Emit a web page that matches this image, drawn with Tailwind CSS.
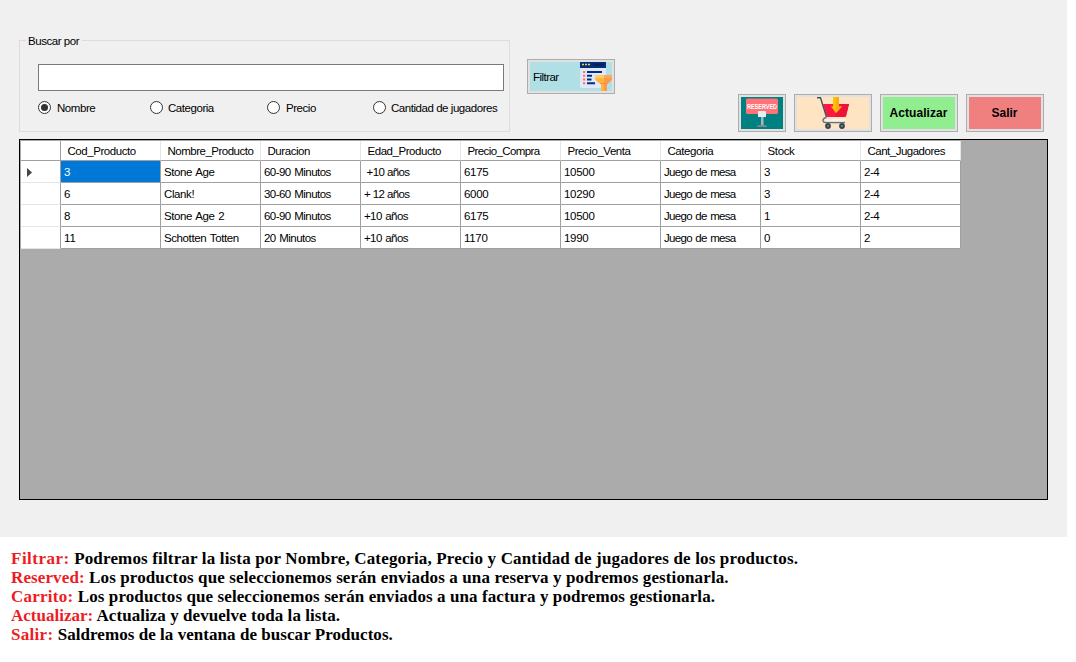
<!DOCTYPE html>
<html lang="es">
<head>
<meta charset="utf-8">
<title>Buscar Productos</title>
<script src="https://cdn.jsdelivr.net/npm/@tailwindcss/browser@4"></script>
</head>
<body class="w-[1076px] h-[662px] overflow-hidden bg-white text-black font-['Liberation_Sans',Arial,sans-serif] text-[11.5px] leading-[13px] tracking-[-0.45px] whitespace-nowrap">
<main class="w-[1067px] h-[537px] bg-[#f0f0f0] pl-[19px] pt-[35px]">
  <div class="flex h-[104px]">
    <fieldset class="w-[491px] border border-[#dcdcdc] pl-[18px] relative mt-[5px] h-[92px]">
      <legend class="absolute -top-[6px] left-[6px] bg-[#f0f0f0] px-[2px] w-[56px]">Buscar por</legend>
      <input type="text" aria-label="Buscar" class="block mt-[23px] w-[466px] h-[27px] bg-white border border-[#7a7a7a] rounded-none">
      <div class="flex mt-[10px] h-[13px] items-center [&_span]:pt-px">
        <label class="flex items-center w-[112px] gap-[6px]"><svg class="size-[13px] shrink-0" viewBox="0 0 13 13"><circle cx="6.5" cy="6.5" r="6" fill="#fff" stroke="#333"/><circle cx="6.5" cy="6.5" r="3.5" fill="#333"/></svg><span>Nombre</span></label>
        <label class="flex items-center w-[117px] gap-[5px]"><svg class="size-[13px] shrink-0" viewBox="0 0 13 13"><circle cx="6.5" cy="6.5" r="6" fill="#fff" stroke="#333"/></svg><span>Categoria</span></label>
        <label class="flex items-center w-[106px] gap-[6px]"><svg class="size-[13px] shrink-0" viewBox="0 0 13 13"><circle cx="6.5" cy="6.5" r="6" fill="#fff" stroke="#333"/></svg><span>Precio</span></label>
        <label class="flex items-center gap-[5px]"><svg class="size-[13px] shrink-0" viewBox="0 0 13 13"><circle cx="6.5" cy="6.5" r="6" fill="#fff" stroke="#333"/></svg><span>Cantidad de jugadores</span></label>
      </div>
    </fieldset>
    <button class="ml-[17px] mt-[24px] w-[88px] h-[35px] border border-[#adadad] bg-[#e1e1e1] p-[2px]">
      <span class="flex items-center justify-between w-full h-full bg-[#b0e0e6] pl-[3px]"><span class="tracking-[-0.55px] pt-px">Filtrar</span>
        <svg class="w-[32px] h-[29px]" viewBox="0 0 32 29"><path d="M0 3H26V26H2Q0 26 0 24Z" fill="#e3e7fb"/><path d="M0 0H26V6H0Z" fill="#003078"/><path d="M2 2.5H11" stroke="#ffcf3e" stroke-width="1.3" stroke-dasharray="2 1"/><path d="M13 1.5H24V4H13Z" fill="#00245e"/><path d="M3 10H5.200M3 13.700H5.200M3 17.400H5.200M3 21.200H5.200" stroke="#ff7958" stroke-width="2"/><path d="M7 10H22M7 13.700H12M7 17.400H11.500M7 21.200H15" stroke="#00307c" stroke-width="2"/><path d="M15 13H32V16Q32 19 27 22V29H21V22Q15 19 15 16Z" fill="#ffb43b"/><path d="M24 13H32V16Q32 19 27 22V29H24Z" fill="#ff974f"/><path d="M15 13H32V16H15Z" fill="#ffce63"/><path d="M24 13H32V16H24Z" fill="#ffab55"/><path d="M20 21.500H28" stroke="#ff8d42"/></svg>
      </span>
    </button>
    <button aria-label="Reserved" class="ml-[123px] mt-[59px] w-[48px] h-[38px] border border-[#adadad] bg-[#e1e1e1] p-[2px]">
      <svg class="block w-full h-full bg-[#008080] overflow-visible" viewBox="0 0 42 32"><rect x="5" y="1.500" width="32" height="15.500" rx="1.500" fill="#ff7378"/><path d="M20 18H22.500V28.500H20Z" fill="#a9b7bd"/><rect x="17" y="14" width="8" height="6" rx=".5" fill="#e8edf0"/><path d="M15.500 30L17.500 28H24.500L26.500 30Z" fill="#7c8a92"/><text x="6" y="11.800" textLength="30" lengthAdjust="spacingAndGlyphs" font-family="Liberation Sans" font-weight="700" font-size="7.500" letter-spacing="0" fill="#fff">RESERVED</text></svg>
    </button>
    <button aria-label="Carrito" class="ml-[8px] mt-[59px] w-[78px] h-[38px] border border-[#adadad] bg-[#e1e1e1] p-[2px]">
      <svg class="block w-full h-full bg-[#ffe4c4]" viewBox="0 0 72 32"><path d="M26 7H52L49 19Q48.700 20 47 20H30Z" fill="#ff1744"/><path d="M39 7H52L49 19Q48.700 20 47 20H39Z" fill="#ef1238"/><path d="M20 .7H23.500L29.500 20" fill="none" stroke="#45505a" stroke-width="1.400"/><path d="M29.500 20.500Q26 21 26 23.300Q26 25.500 28.500 25.500H48" fill="none" stroke="#65717a" stroke-width="1.300"/><path d="M28.500 23.200H47.500" stroke="#f4f4ee" stroke-width="2.600"/><circle cx="31" cy="29" r="2.900" fill="#39444d"/><circle cx="45" cy="29" r="2.900" fill="#39444d"/><circle cx="31" cy="29" r="1" fill="#7b868d"/><circle cx="45" cy="29" r="1" fill="#7b868d"/><path d="M36 0H42V9.500H45L39 16L34 9.500H36Z" fill="#ffc400"/><path d="M39 0H42V9.500H45L39 16Z" fill="#ffa915"/></svg>
    </button>
    <button class="ml-[8px] mt-[59px] w-[78px] h-[38px] border border-[#adadad] bg-[#e1e1e1] p-[2px]"><span class="flex items-center justify-center h-full bg-[#90ee90] font-bold text-[12px] tracking-[0.05px] pr-px">Actualizar</span></button>
    <button class="ml-[8px] mt-[59px] w-[78px] h-[38px] border border-[#adadad] bg-[#e1e1e1] p-[2px]"><span class="flex items-center justify-center h-full bg-[#f08080] font-bold text-[12px] tracking-normal pr-px">Salir</span></button>
  </div>
  <div class="w-[1029px] h-[361px] bg-[#ababab] border border-black p-px">
    <table class="table-fixed w-[940px] border-separate border-spacing-0 bg-white text-left [&_th]:font-normal [&_th]:p-0 [&_td]:p-0 [&_thead_th]:h-[20px] [&_thead_th]:pl-[6.5px] [&_thead_th]:pt-[2px] [&_thead_th]:border-r [&_thead_th]:border-b [&_thead_th]:border-r-[#e5e5e5] [&_thead_th]:border-b-[#a0a0a0] [&_tbody_th]:border-r [&_tbody_th]:border-b [&_tbody_th]:border-r-[#a0a0a0] [&_tbody_th]:border-b-[#e5e5e5] [&_td]:h-[22px] [&_td]:pl-[3px] [&_td]:pt-[2px] [&_td]:border-r [&_td]:border-b [&_td]:border-[#a0a0a0]">
      <colgroup><col class="w-[40px]"><col class="w-[100px]"><col class="w-[100px]"><col class="w-[100px]"><col class="w-[100px]"><col class="w-[100px]"><col class="w-[100px]"><col class="w-[100px]"><col class="w-[100px]"><col class="w-[100px]"></colgroup>
      <thead><tr><th class="border-r-[#a0a0a0]!"></th><th>Cod_Producto</th><th class="tracking-[-0.5px]">Nombre_Producto</th><th>Duracion</th><th>Edad_Producto</th><th class="tracking-[-0.6px]">Precio_Compra</th><th>Precio_Venta</th><th>Categoria</th><th class="tracking-[-0.35px]">Stock</th><th class="tracking-[-0.5px]">Cant_Jugadores</th></tr></thead>
      <tbody class="[&_td]:[word-spacing:1px] [&_td:nth-child(3)]:tracking-[-0.4px] [&_td:nth-child(4)]:tracking-[-0.55px] [&_td:nth-child(5)]:tracking-[-0.6px] [&_td:nth-child(6)]:tracking-[-0.3px] [&_td:nth-child(7)]:tracking-[-0.3px] [&_td:nth-child(8)]:tracking-[-0.7px] [&_td:nth-child(10)]:tracking-[-0.5px]">
        <tr><th class="pt-px!"><svg class="ml-[6px] w-[5px] h-[9px]" viewBox="0 0 5 9"><path d="M0 0L5 4.500L0 9Z" fill="#444"/></svg></th><td class="bg-[#0078d7] text-white">3</td><td>Stone Age</td><td>60-90 Minutos</td><td class="[word-spacing:0px]!">&nbsp;+10 años</td><td>6175</td><td>10500</td><td>Juego de mesa</td><td>3</td><td>2-4</td></tr>
        <tr><th></th><td>6</td><td>Clank!</td><td>30-60 Minutos</td><td class="[word-spacing:0px]!">+ 12 años</td><td>6000</td><td>10290</td><td>Juego de mesa</td><td>3</td><td>2-4</td></tr>
        <tr><th></th><td>8</td><td>Stone Age 2</td><td>60-90 Minutos</td><td>+10 años</td><td>6175</td><td>10500</td><td>Juego de mesa</td><td>1</td><td>2-4</td></tr>
        <tr><th></th><td class="tracking-normal">11</td><td>Schotten Totten</td><td>20 Minutos</td><td>+10 años</td><td>1170</td><td>1990</td><td>Juego de mesa</td><td>0</td><td>2</td></tr>
      </tbody>
    </table>
  </div>
</main>
<section class="pl-[11px] pt-[12px] font-['Liberation_Serif','Times_New_Roman',serif] font-bold text-[17px] leading-[19px]">
  <p class="tracking-[0.16px]"><span class="text-[#ed1c24] tracking-[0.5px]">Filtrar:</span> Podremos filtrar la lista por Nombre, Categoria, Precio y Cantidad de jugadores de los productos.</p>
  <p class="tracking-[0.115px]"><span class="text-[#ed1c24]">Reserved:</span> Los productos que seleccionemos serán enviados a una reserva y podremos gestionarla.</p>
  <p class="tracking-[0.095px]"><span class="text-[#ed1c24] tracking-[0.25px]">Carrito:</span> Los productos que seleccionemos serán enviados a una factura y podremos gestionarla.</p>
  <p class="tracking-[0.05px]"><span class="text-[#ed1c24] tracking-normal">Actualizar:</span> Actualiza y devuelve toda la lista.</p>
  <p class="tracking-[0.05px]"><span class="text-[#ed1c24] tracking-[0.3px]">Salir:</span> Saldremos de la ventana de buscar Productos.</p>
</section>
</body>
</html>
